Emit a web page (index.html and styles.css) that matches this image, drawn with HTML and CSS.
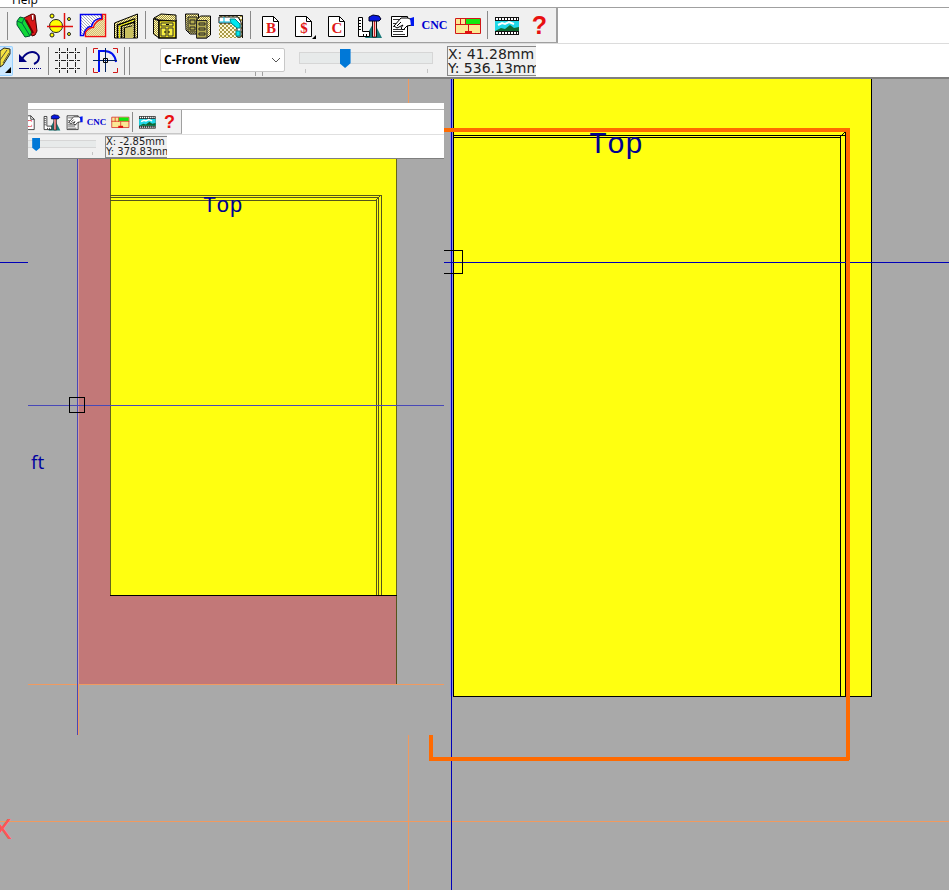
FILE: index.html
```html
<!DOCTYPE html>
<html lang="en">
<head>
<meta charset="utf-8">
<title>Cabinet Front View</title>
<link rel="stylesheet" href="styles.css">
</head>
<body>
<svg class="sprites" aria-hidden="true">
  <defs>
    <pattern id="dither" width="2" height="2" patternUnits="userSpaceOnUse"><rect width="2" height="2" fill="#fff8c0"/><rect width="1" height="1" fill="#a89a38"/><rect x="1" y="1" width="1" height="1" fill="#a89a38"/></pattern>
    <pattern id="check" width="4" height="4" patternUnits="userSpaceOnUse"><rect width="4" height="4" fill="#fff8d8"/><rect width="2" height="2" fill="#a89a48"/><rect x="2" y="2" width="2" height="2" fill="#a89a48"/></pattern>
    <pattern id="hatch" width="3" height="3" patternUnits="userSpaceOnUse"><rect width="3" height="3" fill="#fff"/><path d="M0 0h1v1H0zM1 1h1v1H1zM2 2h1v1H2z" fill="#aab"/></pattern>
  </defs>
  <symbol id="i-books" viewBox="0 0 29 29">
    <path d="M12 7l8-4 3 1 2 16-2 4-3 1-2-5z" fill="#d81818" stroke="#400" stroke-width="1"/>
    <path d="M19 4l3-1v6l-2 1z" fill="#fff" stroke="#800"/>
    <path d="M5 10l3-4 4 1 8 13-2 5-5 1-8-12z" fill="#10d838" stroke="#053" stroke-width="1"/>
    <path d="M5 10l5 2 8 13M10 12l2-4" fill="none" stroke="#064" />
    <path d="M14 9l7 13" stroke="#600" stroke-width="2"/>
  </symbol>
  <symbol id="i-axis" viewBox="0 0 29 29">
    <circle cx="11" cy="15" r="6.500" fill="#ff0" stroke="#222"/>
    <g fill="#ff0" stroke="#222"><circle cx="7" cy="5" r="2"/><circle cx="24" cy="8" r="1.500"/><circle cx="7" cy="24" r="2"/><circle cx="24" cy="23" r="1.500"/></g>
    <path d="M2 15.500h26M19.500 2v26" stroke="#e01010" stroke-width="1.500"/>
  </symbol>
  <symbol id="i-profile" viewBox="0 0 29 29">
    <path d="M2.500 3.500h21v4c-5 0-9 3-10 8-5 0-7 4-8 9h-3z" fill="url(#hatch)" stroke="#00e" stroke-width="1.500"/>
    <path d="M27.500 3.500h-3v5c-4 0-8 3-9 8-4 0-6 2-8 5v4h20z" fill="url(#dither)" stroke="#f01010" stroke-width="1.500"/>
    <path d="M27 4v21H8v-3c2-3 4-5 8-5 1-5 5-8 9-8V4z" fill="#f0d8a0" opacity=".6"/>
  </symbol>
  <symbol id="i-frame" viewBox="0 0 29 29">
    <path d="M3.500 27V12L26.500 3v24z" fill="url(#dither)" stroke="#000"/>
    <path d="M6.500 27V14l17-6v19M10.500 27V15l13-4M13.500 27V17l8-2" fill="none" stroke="#000" stroke-width="1.500"/>
    <path d="M8.500 27V15l15-6" fill="none" stroke="#ee0"/>
    <path d="M14 17l8-2v12h-8z" fill="#c9c060"/>
  </symbol>
  <symbol id="i-cabinet" viewBox="0 0 29 29">
    <path d="M3.500 7.500L9 10v17l-5.500-4z" fill="url(#dither)" stroke="#000"/>
    <path d="M9 9.500h17v17.500H9z" fill="#eee020" stroke="#000" stroke-width="1.500"/>
    <path d="M9 9L4 7l7-4 15 1v6z" fill="url(#dither)" stroke="#000"/>
    <path d="M11 12h12v3H11zM11 17h5v8h-5zM18 17h5v8h-5z" fill="#f8f040" stroke="#333"/>
    <path d="M16 13.500h3M15 20v2M19 20v2" stroke="#000"/>
  </symbol>
  <symbol id="i-cabinets" viewBox="0 0 29 29">
    <path d="M2.500 3h13v20H7l-4-4z" fill="url(#dither)" stroke="#000"/>
    <path d="M5 6h9v15H5zM7 9h5v4H7zM7 16h5v3H7z" fill="#b5ac50" stroke="#222"/>
    <path d="M13.500 9l4-4h10v19l-4 3h-10z" fill="url(#dither)" stroke="#000"/>
    <path d="M13.500 9.500H24V27H13.500zM16 12h6v2h-6zM16 17h6v2h-6zM16 22h6v2h-6z" fill="#b5ac50" stroke="#222"/>
  </symbol>
  <symbol id="i-kitchen" viewBox="0 0 29 29">
    <path d="M3 5h24v22H3z" fill="url(#check)"/>
    <path d="M3 4.500h23.500V27" fill="none" stroke="#111"/>
    <path d="M3 6h19l3 5v15h-4V16l-6-4H3z" fill="#fff" stroke="#111"/>
    <path d="M14 8h5l5 5v4h-3l-6-5zM20 20h4v5h-4z" fill="#00e8f0" stroke="#088"/>
    <path d="M3 11h12M8 6v5" stroke="#0bd"/>
  </symbol>
  <symbol id="i-page" viewBox="0 0 29 29">
    <path d="M7.500 5.500h11l5 5v15h-16z" fill="#fff" stroke="#000"/>
    <path d="M18.500 5.500v5h5" fill="none" stroke="#000"/>
  </symbol>
  <symbol id="i-tools" viewBox="0 0 29 29">
    <path d="M20 11l8 16H11z" fill="#187878"/>
    <path d="M4.500 6.500h4v14h7v5h-11z" fill="#fff" stroke="#000"/>
    <path d="M5 9.500h2M5 12.500h2M5 15.500h2M5 18.500h2M9.500 25v-2M12.500 25v-2" stroke="#000"/>
    <path d="M18.500 9h4v17h-4z" fill="#fff" stroke="#111"/><path d="M20.500 9v17" stroke="#d02020" stroke-width="1.500"/>
    <path d="M15 6l4-2 6 1 2 3-2 2H15z" fill="#0818e0" stroke="#002"/>
  </symbol>
  <symbol id="i-props" viewBox="0 0 29 29">
    <path d="M4.500 5.500h16v20h-16z" fill="#fff" stroke="#000"/>
    <path d="M6 8.500h7M6 12.500h3M6 15.500h3M6 18.500h12M6 20.500h10M6 23.500h12" stroke="#333"/>
    <path d="M7 15l7-8h7l4 2v5l-5 1-4 4-2-2 2-3-6 3z" fill="#fff" stroke="#000"/>
    <path d="M14 11l-4 4" stroke="#000"/>
    <path d="M23 7h1l3-1v9h-3z" fill="#0018f0"/>
  </symbol>
  <symbol id="i-floor" viewBox="0 0 29 29">
    <path d="M2.500 7.500h25v15h-25z" fill="#fbe894" stroke="#d01818"/>
    <path d="M13 8h14v5H13z" fill="#10e810"/>
    <path d="M2 13.500h26M7.500 8v6M12.500 8v6M15.500 14v7" stroke="#d01818"/>
    <path d="M12 20h7v3h-7z" fill="#e01010"/>
  </symbol>
  <symbol id="i-film" viewBox="0 0 29 29">
    <path d="M3 6h24v18H3z" fill="#111"/>
    <path d="M4 8h22M4 22h22" stroke="#fff" stroke-width="2" stroke-dasharray="2 1"/>
    <path d="M3 10h24v10H3z" fill="#20d8e8"/>
    <path d="M6 14l4-2 3 1 4-2 5 2" stroke="#fff" stroke-width="2" fill="none"/>
    <path d="M3 20l6-3 4 1 5-4 4 3 5-1v4z" fill="#106830"/>
  </symbol>
  <symbol id="i-pencil" viewBox="0 0 13 29">
    <path d="M0 5l4-3 6 1v5l-7 11-3 2z" fill="#f4e040" stroke="#222"/>
    <path d="M0 14l7-10M3 17l6-10" stroke="#554"/>
    <path d="M11 21v6H5z" fill="#000"/>
  </symbol>
  <symbol id="i-undo" viewBox="0 0 29 29">
    <path d="M7 13c4-7 10-8 14-6 5 3 3 9-2 11" fill="none" stroke="#000080" stroke-width="2"/>
    <path d="M4 8v8h8z" fill="#000080"/>
    <path d="M4 22.500h10" stroke="#000080"/><path d="M15 22.500h11" stroke="#000080" stroke-dasharray="1 1"/>
  </symbol>
  <symbol id="i-grid" viewBox="0 0 29 29">
    <path d="M2 6.500h3M8 6.500h5M16 6.500h5M24 6.500h3M2 14.500h3M8 14.500h5M16 14.500h5M24 14.500h3M2 22.500h3M8 22.500h5M16 22.500h5M24 22.500h3" stroke="#222"/>
    <path d="M6.500 2v3M6.500 8v5M6.500 16v5M6.500 24v3M14.500 2v3M14.500 8v5M14.500 16v5M14.500 24v3M22.500 2v3M22.500 8v5M22.500 16v5M22.500 24v3" stroke="#222"/>
    <path d="M6 6.500h1M14 6.500h1M22 6.500h1M6 14.500h1M14 14.500h1M22 14.500h1M6 22.500h1M14 22.500h1M22 22.500h1" stroke="#222"/>
  </symbol>
  <symbol id="i-snap" viewBox="0 0 29 29">
    <path d="M2.500 7V2.500H7M22 2.500h4.500V7M2.500 22v4.500H7M22 26.500h4.500V22" fill="none" stroke="#d01818"/>
    <path d="M8 26V5h5c7 0 11 4 12 11" fill="none" stroke="#0010f0" stroke-width="2"/>
    <path d="M14.500 2v24M2 14.500h24" stroke="#002060"/>
    <path d="M12.500 12.500h4v4h-4z" fill="none" stroke="#000"/>
  </symbol>
</svg>

<header class="chrome">
  <nav class="menu"><a href="#help">Help</a></nav>
  <div class="strip">
    <div class="bar bar-tools" role="toolbar" aria-label="Tools">
      <button class="tool" aria-label="Catalog"><svg><use href="#i-books"/></svg></button>
      <button class="tool" aria-label="Hardware"><svg><use href="#i-axis"/></svg></button>
      <button class="tool" aria-label="Profiles"><svg><use href="#i-profile"/></svg></button>
      <button class="tool" aria-label="Frames"><svg><use href="#i-frame"/></svg></button>
      <span class="sep"></span>
      <button class="tool" aria-label="Cabinet"><svg><use href="#i-cabinet"/></svg></button>
      <button class="tool" aria-label="Cabinet library"><svg><use href="#i-cabinets"/></svg></button>
      <button class="tool" aria-label="Room"><svg><use href="#i-kitchen"/></svg></button>
      <span class="sep"></span>
      <button class="tool" aria-label="Bill"><svg viewBox="0 0 29 29"><use href="#i-page"/><text class="letter" x="16" y="22">B</text></svg></button>
      <button class="tool" aria-label="Price"><svg viewBox="0 0 29 29"><use href="#i-page"/><text class="letter" x="16" y="22">$</text><path d="M28 24v4h-4z"/></svg></button>
      <button class="tool" aria-label="Cut list"><svg viewBox="0 0 29 29"><use href="#i-page"/><text class="letter" x="16" y="22">C</text></svg></button>
      <button class="tool" aria-label="Build"><svg><use href="#i-tools"/></svg></button>
      <button class="tool" aria-label="Properties"><svg><use href="#i-props"/></svg></button>
      <button class="tool cnc">CNC</button>
      <button class="tool" aria-label="Layout"><svg><use href="#i-floor"/></svg></button>
      <span class="sep"></span>
      <button class="tool" aria-label="Video"><svg><use href="#i-film"/></svg></button>
      <button class="tool ask">?</button>
    </div>
  </div>
  <div class="strip strip-view">
    <div class="bar bar-view" role="toolbar" aria-label="View">
      <button class="edit" aria-label="Edit"><svg><use href="#i-pencil"/></svg></button>
      <button class="tool" aria-label="Undo"><svg><use href="#i-undo"/></svg></button>
      <span class="sep"></span>
      <button class="tool" aria-label="Grid"><svg><use href="#i-grid"/></svg></button>
      <span class="sep"></span>
      <button class="tool" aria-label="Snap"><svg><use href="#i-snap"/></svg></button>
      <span class="sep"></span><span class="sep"></span>
      <div class="view">
        <select aria-label="View"><option>C-Front View</option></select>
        <svg class="chevron" viewBox="0 0 10 6"><path d="M1 1l4 4 4-4"/></svg>
      </div>
      <div class="zoom"><input type="range" min="0" max="100" value="33" aria-label="Zoom"></div>
      <output class="coords">X: 41.28mm<br>Y: 536.13mm</output>
    </div>
  </div>
</header>

<main class="canvas">
  <svg class="drawing" role="img" aria-label="Front view">
    <path class="axis" d="M408.500 0v4000"/>
    <line class="axis" x1="0" x2="100%" y1="743.500" y2="743.500"/>
    <rect class="panel" x="453.500" y="-10" width="418" height="628"/>
    <path class="halo" d="M450.500 0v618M452.500 0v618"/>
    <path class="cursor" d="M451.500 0v4000"/>
    <path class="edge" d="M453 57.500h392M453 59.500h387.500V618M845.500 618V54M840 59l8-8"/>
    <line class="cursor" x1="0" x2="100%" y1="184.500" y2="184.500"/>
    <path class="edge" d="M440.500 172.500h22v23h-22z"/>
    <text class="label" x="589" y="75">Top</text>
    <path class="highlight" d="M431 52h417v629H431z"/>
    <text class="origin" x="-8" y="761">X</text>
  </svg>

  <section class="inset" aria-label="Detail view">
    <div class="inset-top"></div>
    <div class="strip">
      <div class="bar bar-tools" role="toolbar" aria-label="Detail tools">
        <button class="tool" aria-label="Cut list"><svg viewBox="0 0 29 29"><use href="#i-page"/><text class="letter" x="16" y="22">C</text></svg></button>
        <button class="tool" aria-label="Build"><svg><use href="#i-tools"/></svg></button>
        <button class="tool" aria-label="Properties"><svg><use href="#i-props"/></svg></button>
        <button class="tool cnc">CNC</button>
        <button class="tool" aria-label="Layout"><svg><use href="#i-floor"/></svg></button>
        <span class="sep"></span>
        <button class="tool" aria-label="Video"><svg><use href="#i-film"/></svg></button>
        <button class="tool ask">?</button>
      </div>
    </div>
    <div class="strip strip-view">
      <div class="bar bar-view">
        <div class="zoom"><input type="range" min="0" max="100" value="7" aria-label="Detail zoom"></div>
        <output class="coords">X: -2.85mm<br>Y: 378.83mm</output>
      </div>
    </div>
    <svg class="detail" role="img" aria-label="Detail drawing">
      <rect class="wood" x="51" y="0" width="317" height="525"/>
      <path class="dim" d="M368.500 436v89"/>
      <rect class="panel dim-edge" x="82.500" y="-10" width="286" height="446"/>
      <path class="edge" d="M82 436.500h287"/>
      <path class="dim" d="M82 36.500h271V436M82 38.500h268M82 41.500h266V436M350.500 436V38M347 42l6-6"/>
      <path class="halo-pink" d="M50.500 0v525"/>
      <line class="axis" x1="0" x2="416" y1="525.500" y2="525.500"/>
      <line class="axis" x1="50.500" x2="50.500" y1="525" y2="576"/>
      <line class="cursor soft" x1="49.500" x2="49.500" y1="0" y2="576"/>
      <line class="cursor soft" x1="0" x2="416" y1="246.500" y2="246.500"/>
      <path class="edge" d="M41.500 238.500h15v15h-15z"/>
      <text class="label" x="175" y="53">Top</text>
      <text class="side" x="3" y="310">ft</text>
    </svg>
  </section>
</main>
</body>
</html>
```
FILE: styles.css
```css
* { box-sizing: border-box; }

body {
  margin: 0;
  min-height: 100vh;
  display: flex;
  flex-direction: column;
  background: #a9a9a9;
  font-family: "Open Sans", sans-serif;
  overflow-x: hidden;
}

.sprites { position: absolute; width: 0; height: 0; }

.chrome { background: #fff; border-bottom: 2px solid #7f7f7f; }

.menu {
  height: 7px;
  display: flex;
  align-items: flex-end;
  padding-left: 12px;
  overflow: hidden;
}
.menu a {
  color: #000;
  font-size: 12px;
  line-height: 14px;
  text-decoration: none;
}

.strip {
  display: flex;
  border-top: 1px solid #a0a0a0;
}
.strip-view { border-top-color: #dcdcdc; }

.bar {
  display: flex;
  align-items: center;
  background: #f0f0f0;
}
.bar-tools {
  height: 35px;
  padding-left: 10px;
  border-right: 2px solid #a0a0a0;
  border-bottom: 1px solid #a0a0a0;
  background: linear-gradient(to right, transparent 7px, #8a8a8a 7px, #8a8a8a 8px, transparent 8px) 0 4px / 100% 28px no-repeat #f0f0f0;
}
.bar-view { height: 33px; }

.tool, .edit {
  display: flex;
  align-items: center;
  justify-content: center;
  flex: none;
  width: 33px;
  height: 32px;
  padding: 0;
  border: 0;
  background: none;
}
.tool svg { width: 29px; height: 29px; flex: none; }

.edit {
  width: 13px;
  height: 30px;
  border: 1px solid #99d1ff;
  border-left: 0;
  border-radius: 0 2px 2px 0;
  background: #cce8ff;
}
.edit svg { width: 13px; height: 29px; flex: none; }

.cnc {
  color: #0000d0;
  font: bold 12px/16px "Liberation Serif", serif;
}
.ask {
  color: #e81010;
  font: bold 25px/28px "Liberation Sans", sans-serif;
}
.letter {
  fill: #e01818;
  font: bold 15px "Liberation Serif", serif;
  text-anchor: middle;
}

.sep {
  flex: none;
  width: 6px;
  height: 28px;
  background: linear-gradient(#8a8a8a, #8a8a8a) 3px 0 / 1px 100% no-repeat;
}
.bar-view .sep { width: 5px; background-position-x: 2px; }

.view { position: relative; margin-left: 28px; align-self: flex-start; margin-top: 4px; }
.view select {
  display: block;
  width: 125px;
  height: 24px;
  padding: 0 3px;
  appearance: none;
  border: 1px solid #c8c8c8;
  border-radius: 2px;
  background: #fff;
  color: #000;
  font: bold 12px/20px "Open Sans", sans-serif;
}
.view::after {
  content: "";
  position: absolute;
  left: 95px;
  top: 24px;
  width: 6px;
  height: 4px;
  border: solid #a0a0a0;
  border-width: 0 1px;
}
.chevron {
  position: absolute;
  right: 4px;
  top: 9px;
  width: 10px;
  height: 6px;
  fill: none;
  stroke: #555;
  pointer-events: none;
}

.zoom {
  align-self: flex-start;
  width: 134px;
  height: 28px;
  margin: 5px 14px 0;
  background:
    linear-gradient(#c4c4c4, #c4c4c4) 6px 20px / 1px 4px no-repeat,
    linear-gradient(#c4c4c4, #c4c4c4) 128px 20px / 1px 4px no-repeat;
}
.zoom input {
  display: block;
  width: 100%;
  height: 20px;
  margin: 0;
  appearance: none;
  background: linear-gradient(#d6d6d6, #d6d6d6) 0 3px / 100% 12px no-repeat;
}
.zoom input::-webkit-slider-runnable-track {
  height: 20px;
  background: linear-gradient(#e7eaea, #e7eaea) 1px 4px / calc(100% - 2px) 10px no-repeat;
}
.zoom input::-webkit-slider-thumb {
  appearance: none;
  width: 11px;
  height: 19px;
  background: #0078d7;
  clip-path: polygon(0 0, 100% 0, 100% 75%, 50% 100%, 0 75%);
}

.coords {
  width: 89px;
  height: 30px;
  overflow: hidden;
  border: 1px solid #888;
  border-right: 0;
  background: #f0f0f0;
  color: #222;
  font: 14px/14px "DejaVu Sans", sans-serif;
  white-space: nowrap;
}

.canvas {
  position: relative;
  flex: 1;
  display: flex;
  min-height: 780px;
  overflow: hidden;
}
.drawing { flex: 1; width: 100%; margin-top: -1px; shape-rendering: crispEdges; }

.axis { stroke: #f09a60; fill: none; }
.panel { fill: #ffff10; stroke: #000; }
.dim-edge { stroke: #66661c; }
.wood { fill: #c27878; }
.edge { fill: none; stroke: #000; }
.dim { fill: none; stroke: #55551c; }
.halo { stroke: #9090e0; }
.halo-pink { stroke: #d0a0a0; }
.cursor { stroke: #0000b8; fill: none; }
.soft { stroke: #4848b8; }
.highlight { fill: none; stroke: #ff6a00; stroke-width: 4px; stroke-linejoin: round; }

.label { fill: #000090; font: 30px "Liberation Mono", monospace; }
.origin { fill: #ff5555; font: 30px "Liberation Sans", sans-serif; }
.side { fill: #0000a0; font: 19px "Open Sans", sans-serif; }

.inset {
  position: absolute;
  left: 28px;
  top: 24px;
  width: 416px;
  background: #a9a9a9;
  overflow: hidden;
}
.inset-top { height: 6px; background: #fff; }
.inset .strip { background: #fff; border-top-color: #b8b8b8; }
.inset .strip-view { border-top-color: #e0e0e0; border-bottom: 1px solid #7f7f7f; }
.inset .bar-tools {
  height: 24px;
  padding: 0;
  background: #f0f0f0;
  border-right-width: 1px;
  border-bottom-color: #c8c8c8;
}
.inset .bar-tools .tool:first-child { margin-left: -12px; }
.inset .bar-view { height: 23px; }
.inset .tool { width: 23px; height: 22px; }
.inset .tool svg { width: 20px; height: 20px; }
.inset .sep { width: 4px; height: 20px; background-position-x: 1px; }
.inset .cnc { font-size: 9px; }
.inset .ask { font-size: 18px; line-height: 20px; }
.inset .zoom {
  width: 68px;
  height: 20px;
  margin: 3px 9px 0 0;
  background: linear-gradient(#c4c4c4, #c4c4c4) 64px 14px / 1px 3px no-repeat;
}
.inset .zoom input {
  height: 14px;
  background-size: 100% 8px;
  background-position: 0 2px;
}
.inset .zoom input::-webkit-slider-runnable-track { height: 14px; background-size: 100% 6px; background-position: 0 3px; }
.inset .zoom input::-webkit-slider-thumb { width: 8px; height: 13px; }
.inset .coords { width: 62px; height: 22px; font-size: 10px; line-height: 10px; }

.detail { display: block; width: 100%; height: 576px; shape-rendering: crispEdges; }
.detail .label { font-size: 22px; }
```
